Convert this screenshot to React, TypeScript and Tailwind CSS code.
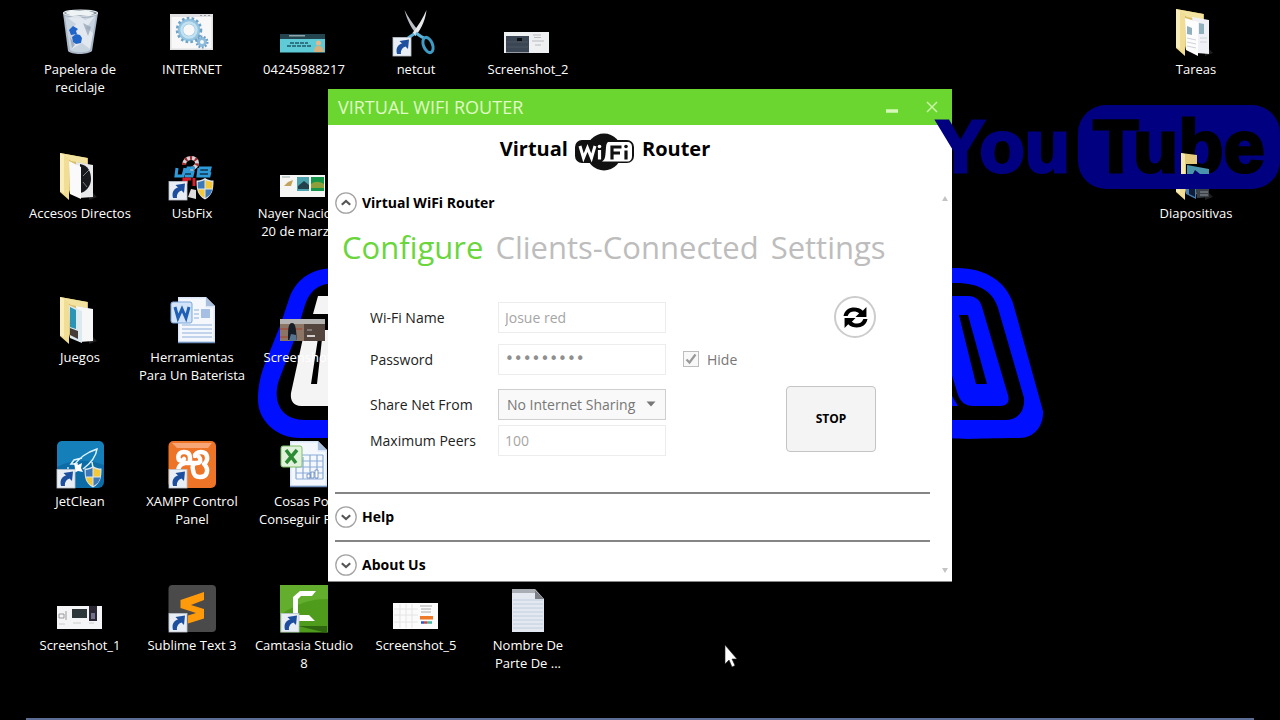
import React from 'react';

interface DesktopItem {
  label: string;
  icon: React.ReactNode;
}

/* ---------- shared icon pieces (48x48 grid) ---------- */

function Shortcut() {
  return (
    <g>
      <rect x="1" y="28.500" width="18" height="18.500" fill="#e9eef4" stroke="#b9c3cf" strokeWidth="0.8" />
      <path d="M5 45c-1.500-6 1-9.500 5-10.500l-2.500-2.500 9.500-1.500-1 9.500-2.500-2.500c-3 1-5 3.500-4.500 7.500z" fill="#1d4f9e" />
    </g>
  );
}

function Shield() {
  return (
    <g>
      <path d="M37 25c3 2 5.500 2.500 8.500 2.500 0 9-1 15-8.500 19-7.500-4-8.500-10-8.500-19 3 0 5.500-.500 8.500-2.500z" fill="#dfe6ee" />
      <path d="M36.500 27v8.500h-6.500c-.300-2-.300-4-.200-6.500 2.500-.200 4.700-.800 6.700-2zM37.500 36.500h6.700c-.700 3.700-2.700 6.500-6.700 8.500z" fill="#3d78b8" />
      <path d="M37.500 27v8.500h6.700c.300-2 .300-4 .200-6.500-2.500-.200-4.900-.800-6.900-2zM36.500 36.500h-6.400c.700 3.700 2.400 6.500 6.400 8.500z" fill="#f3c93a" />
    </g>
  );
}

function Svg({ children }: { children: React.ReactNode }) {
  return (
    <svg viewBox="0 0 48 48" className="h-12 w-12 overflow-visible" aria-hidden="true">
      {children}
    </svg>
  );
}

function RecycleBin() {
  return (
    <Svg>
      <path d="M7 4l5 38c3 4 20 4 24 0l6-38c-8-3-27-3-35 0z" fill="#a9b7c6" />
      <path d="M9 7l5 34c4 3 16 3 20 0l6-34c-8 3-24 3-31 0z" fill="#c8d3e0" />
      <path d="M12 9l8 6-7 8 8 5-5 12 10-6 8 6 3-16-7-5 9-12-10 4-7-5z" fill="#e9eef4" opacity="0.8" />
      <path d="M27 14l8 4-3 9zM14 28l5 8-3 3z" fill="#8595a9" opacity="0.6" />
      <ellipse cx="24.500" cy="4" rx="17" ry="3" fill="#6e7b88" stroke="#dfe6ea" strokeWidth="1.200" />
      <path d="M9 4l6-3 8 1 7-1 9 3-6 3-9-1-8 1z" fill="#eef3f6" />
      <path d="M13 21l4-4 5 3-2 2 1 3-6 1zM16 28l4-3 4 1 2 3-1 5-5 1-3-2z" fill="#2265c9" />
    </Svg>
  );
}

function Gears() {
  return (
    <Svg>
      <rect x="2" y="5" width="43" height="36" fill="#e0e0e3" />
      <rect x="3.500" y="8" width="40" height="31.500" fill="#f8f8f9" />
      <path d="M32 6.500h10" stroke="#9aa0a8" strokeDasharray="2 2" />
      <circle cx="21" cy="21" r="8.500" fill="none" stroke="#94c3e0" strokeWidth="5.500" />
      <circle cx="21" cy="21" r="12" fill="none" stroke="#6fa3c6" strokeWidth="2.500" strokeDasharray="2.600 2.300" />
      <circle cx="21" cy="21" r="7.500" fill="none" stroke="#c2e2f2" strokeWidth="2.500" />
      <circle cx="34" cy="33" r="3.500" fill="none" stroke="#8dbbdc" strokeWidth="3" />
      <circle cx="34" cy="33" r="5.500" fill="none" stroke="#6c9cc4" strokeWidth="2" strokeDasharray="1.800 1.600" />
    </Svg>
  );
}

function BannerThumb() {
  return (
    <Svg>
      <rect x="0" y="25" width="45" height="18.500" fill="#5ecbd6" />
      <rect x="0" y="25" width="45" height="5" fill="#24444f" />
      <rect x="9" y="26" width="16" height="1.500" fill="#8fa3aa" />
      <path d="M10 34h18M7 37h24" stroke="#1f5a6c" strokeWidth="1.300" strokeDasharray="4 1" />
      <circle cx="38.500" cy="34" r="2.500" fill="#e9b58a" />
      <path d="M34 43c0-5 2-6 4.500-6s5 1 5 6z" fill="#d8b080" />
    </Svg>
  );
}

function Scissors() {
  return (
    <Svg>
      <path d="M12.500 1c2 8 6 17 11 23l3-2C21 15 16 8 12.500 1z" fill="#b9bdc4" />
      <path d="M34.500 1c-1 9-4 17-11 26l-3-3C26 17 31 9 34.500 1z" fill="#e6e8ec" />
      <path d="M24 24c3 2 5 4 8 5" stroke="#5fb4d9" strokeWidth="3" />
      <ellipse cx="36" cy="36" rx="4.500" ry="8" transform="rotate(-22 36 36)" fill="none" stroke="#3e9bc4" strokeWidth="3" />
      <path d="M22 25l-6 4" stroke="#5fb4d9" strokeWidth="3" />
      <Shortcut />
    </Svg>
  );
}

function StoreThumb() {
  return (
    <Svg>
      <rect x="0" y="23" width="45" height="21" fill="#eef0f2" />
      <rect x="2" y="27" width="23" height="16.500" fill="#3a4653" />
      <path d="M3 33h21M3 38h21" stroke="#4c5763" />
      <rect x="13" y="29" width="5" height="3" fill="#0a0e13" />
      <path d="M29 26h8M30 28.500h7M28 32h12M31 36h6" stroke="#b8bbbf" />
    </Svg>
  );
}

function FolderBack() {
  return (
    <g>
      <path d="M33 36l8 8-8 3z" fill="#333" opacity="0.600" />
      <path d="M4 0l28 5v36H14z" fill="#d9bd67" />
      <path d="M4 0l27 5v6L15 8z" fill="#f3e3a0" />
    </g>
  );
}

function FolderFront() {
  return (
    <g>
      <path d="M4 0l9 5v42L4 39z" fill="#f1dd93" />
      <path d="M4 0l4 2v38l-4-2z" fill="#f9edba" />
    </g>
  );
}

function DiscFolder() {
  return (
    <Svg>
      <FolderBack />
      <path d="M20 9l17 3v32l-14 1z" fill="#e7e9eb" />
      <path d="M24 11c8 1 11 8 11 15s-5 13-11 14z" fill="#17191c" />
      <path d="M27 23l6-6M27 29l4 5" stroke="#77808a" />
      <path d="M13 8l12 6v32l-11-5z" fill="#fafafa" />
      <FolderFront />
    </Svg>
  );
}

function GamesFolder() {
  return (
    <Svg>
      <FolderBack />
      <path d="M20 9l17 3v32l-14 1z" fill="#f7f7f8" />
      <path d="M13 8l13 6v32l-12-5z" fill="#dce9ee" />
      <path d="M14 10l6 3v19l-6-2z" fill="#2c95b5" />
      <path d="M14 31l8 3v8l-8-4z" fill="#463d39" />
      <FolderFront />
    </Svg>
  );
}

function DocsFolder() {
  return (
    <Svg>
      <FolderBack />
      <path d="M20 8l17 3v34l-12-1z" fill="#f0f1f6" />
      <path d="M13 9l13 4v34l-12-6z" fill="#fdfdfe" />
      <path d="M15 17l5 2v7l-5-1zM27 14l5 1v10h-5z" fill="#8fb0bc" />
      <path d="M15 29l9 2M15 33l9 2M15 37l9 2M28 29h7M28 33h7" stroke="#d0d2dc" />
      <FolderFront />
    </Svg>
  );
}

function SlidesFolder() {
  return (
    <Svg>
      <FolderBack />
      <path d="M20 15l17 2v27l-12 1z" fill="#3a4146" />
      <path d="M20 15l17 2v6H20z" fill="#4f9aa6" />
      <path d="M13 13l11 3v30l-10-5z" fill="#4a7eb3" />
      <path d="M17 34l6 2v8l-6-3z" fill="#101c35" />
      <path d="M28 39h8M28 42h8" stroke="#8d9398" />
      <FolderFront />
    </Svg>
  );
}

function UsbFix() {
  return (
    <Svg>
      <path d="M16 12c0-9 13-9 13-2 0 5-6 4-6 9" fill="none" stroke="#d9d2d4" strokeWidth="4" />
      <path d="M16 12c0-9 13-9 13-2 0 5-6 4-6 9" fill="none" stroke="#a02b30" strokeWidth="4" strokeDasharray="2 3" />
      <path d="M9 15l-1 8h7l2-8M27 15h-7l-1 4h6l-1 4h-7M31 15h11l-1 4h-10M31 15l-1 8h11l1-4" fill="none" stroke="#2e9bd8" strokeWidth="3" />
      <path d="M15 26h8M14 29h6M26 25v8M16 25v9" stroke="#d4202a" strokeWidth="3" />
      <path d="M20 44l3-8 5 1v9z" fill="#ddd" />
      <Shortcut />
      <Shield />
    </Svg>
  );
}

function PhotosThumb() {
  return (
    <Svg>
      <rect x="0" y="22" width="45" height="22" fill="#f5f5f4" />
      <path d="M2 24h8" stroke="#9aa" />
      <path d="M4 33l4-4 5-2-2 6z" fill="#c3a35c" />
      <rect x="17" y="24" width="12" height="14" fill="#4da4ae" />
      <path d="M18 33l6-5 5 4v4H18z" fill="#23414a" />
      <rect x="31" y="24" width="13" height="14" fill="#16964a" />
      <path d="M31 31c4-3 8-3 13 0v4H31z" fill="#8d9f3b" />
    </Svg>
  );
}

function PageShape() {
  return (
    <g>
      <path d="M10 0h28l9 9v37H10z" fill="#dbe7f7" />
      <path d="M11.500 1.500h26v9h8v34h-34z" fill="#f4f8fd" />
      <path d="M38 0l9 9h-9z" fill="#a9bfdc" />
      <path d="M10 45.500h37" stroke="#6f8fbd" strokeWidth="1.500" />
    </g>
  );
}

function WordDoc() {
  return (
    <Svg>
      <PageShape />
      <path d="M26 13h5M26 17h5M26 21h5M14 28h30M14 32h30M14 36h30M14 40h30" stroke="#8eb0da" strokeWidth="1.200" />
      <rect x="33" y="12" width="9" height="9" fill="#a5c0e4" />
      <rect x="3" y="5" width="21" height="21" rx="2" fill="#d3e4f8" stroke="#7aa7dc" />
      <path d="M7 10l3 11 4-9 4 9 3-11" fill="none" stroke="#1f5fb5" strokeWidth="3" />
    </Svg>
  );
}

function ExcelDoc() {
  return (
    <Svg>
      <PageShape />
      <path d="M16 38V20M23 38V16M30 38V14M37 38V14M43 38V14M22 14h21M16 20h27M16 26h27M16 32h27M16 38h27" stroke="#89abd6" strokeWidth="1.200" />
      <path d="M27 37v-4h3v4zM31 37v-6h3v6zM35 37v-8h3v8z" fill="#fff" stroke="#5d84bd" strokeWidth="0.800" />
      <rect x="1" y="5" width="21" height="21" rx="2" fill="#e1f2dc" stroke="#7cbf6b" />
      <path d="M6 9l10 13M17 9L6 22" stroke="#2b8a34" strokeWidth="3.500" />
    </Svg>
  );
}

function PersonThumb() {
  return (
    <Svg>
      <rect x="0" y="22" width="45" height="22" fill="#54463f" />
      <rect x="0" y="22" width="24" height="22" fill="#8d7566" />
      <path d="M0 22h45v5H0z" fill="#b5b4b2" />
      <path d="M0 32h22M0 40h10" stroke="#a8442c" strokeWidth="1.200" />
      <path d="M8 43c0-10 0-17 4-17s4 7 5 17z" fill="#171d27" />
      <path d="M9 44l2-7 5 1 1 6z" fill="#56748f" />
      <path d="M27 39h8" stroke="#fff" strokeWidth="1.500" />
      <path d="M27 33h5" stroke="#aaa" />
    </Svg>
  );
}

function JetClean() {
  return (
    <Svg>
      <rect x="1" y="0" width="47" height="47" rx="6" fill="#0d6ca6" />
      <path d="M1 26c14-8 32-8 47-2V6c0-4-2-6-6-6H7C3 0 1 2 1 6z" fill="#157fb9" />
      <path d="M19 23c5-6 10-11 22-15-1 8-6 14-14 20M26 17l-8 2-3 4h7M36 21l1 6-5 5" fill="none" stroke="#dff2fb" strokeWidth="1.500" />
      <path d="M18 22l4 2 4-2-1 5 2 4-5-1-4 2 1-5z" fill="#fff" />
      <circle cx="12" cy="27" r="1" fill="#cfe9f5" />
      <Shortcut />
      <Shield />
    </Svg>
  );
}

function Xampp() {
  return (
    <Svg>
      <rect x="0.500" y="0" width="47.500" height="47" rx="5" fill="#ee7427" />
      <path d="M4 2h40l-4 5H9z" fill="#f7a678" />
      <path
        d="M11 19c-2-5 1-8 5-8 5 0 6 3 6 6v5h7c4 0 4-4 2-6M11 19c2 1 3 1 5-1M11 34c-2-6 0-11 6-12h5M29 22c-4 0-5 3-4 7 1 6 3 7 7 7 8 0 9-8 4-13 5-4 4-12-3-12-4 0-6 2-6 4"
        fill="none"
        stroke="#fff"
        strokeWidth="4.500"
        strokeLinejoin="round"
        strokeLinecap="round"
      />
      <Shortcut />
    </Svg>
  );
}

function SublimeText() {
  return (
    <Svg>
      <rect x="0.500" y="0" width="47.500" height="47" rx="4" fill="#4a4a4a" />
      <path d="M36 7v8l-13 5 13 4v9.500l-16 5v-8l8-2.500-15.500-5v-8z" fill="#ff9a0a" />
      <Shortcut />
    </Svg>
  );
}

function Camtasia() {
  return (
    <Svg>
      <rect x="0" y="0" width="48" height="47.500" fill="#4f9c1d" />
      <path d="M0 0h48v14c-18 0-30 4-48 16z" fill="#63ae2c" />
      <path d="M18 41h29v7z" fill="#2e6710" />
      <path d="M36 6H20l-7 6v24h22l-6-6H18V14l3-3h11z" fill="#fff" />
      <Shortcut />
    </Svg>
  );
}

function PhonesThumb() {
  return (
    <Svg>
      <rect x="1" y="21" width="45" height="23" fill="#f5f5f7" />
      <path d="M3 29h5v4H3zM10 26v9" stroke="#999" fill="none" />
      <rect x="16" y="24" width="15" height="9" fill="#2d373b" />
      <rect x="33" y="21" width="8" height="15" fill="#2c2735" />
      <rect x="35" y="28" width="4" height="6" fill="#73708d" />
      <path d="M3 39h6M17 38h8M33 38h5" stroke="#ccc" />
    </Svg>
  );
}

function OrdersThumb() {
  return (
    <Svg>
      <rect x="1" y="18" width="45" height="26" fill="#fbfbfb" />
      <path d="M2 24h24M2 30h24M2 37h24M8 19v24M14 19v24M20 19v24" stroke="#e4e4e4" />
      <path d="M28 21h12M29 24h10M29 27h10" stroke="#aaa" />
      <rect x="28" y="31" width="13" height="3.500" fill="#ee7a27" />
      <path d="M29 37.500h3" stroke="#2b59c3" strokeWidth="2.500" />
      <path d="M32 37.500h3" stroke="#d9403b" strokeWidth="2.500" />
      <path d="M35 37.500h5" stroke="#44b4a0" strokeWidth="2.500" />
    </Svg>
  );
}

function TextFile() {
  return (
    <Svg>
      <path d="M8 4h23l9 10v33H8z" fill="#e4e9f1" />
      <path d="M8 4h23v4H8z" fill="#a9adb4" />
      <path d="M31 5v9h9z" fill="#7b8087" />
      <path d="M9 15h30M9 19h30M9 23h30M9 27h30M9 31h30M9 35h30M9 39h30M9 43h30" stroke="#b9cbdc" strokeWidth="0.900" />
    </Svg>
  );
}

const rows: DesktopItem[][] = [
  [
    { label: 'Papelera de\nreciclaje', icon: <RecycleBin /> },
    { label: 'INTERNET', icon: <Gears /> },
    { label: '04245988217', icon: <BannerThumb /> },
    { label: 'netcut', icon: <Scissors /> },
    { label: 'Screenshot_2', icon: <StoreThumb /> },
  ],
  [
    { label: 'Accesos Directos', icon: <DiscFolder /> },
    { label: 'UsbFix', icon: <UsbFix /> },
    { label: 'Nayer Nacional\n20 de marzo...', icon: <PhotosThumb /> },
  ],
  [
    { label: 'Juegos', icon: <GamesFolder /> },
    { label: 'Herramientas\nPara Un Baterista', icon: <WordDoc /> },
    { label: 'Screenshot_3', icon: <PersonThumb /> },
  ],
  [
    { label: 'JetClean', icon: <JetClean /> },
    { label: 'XAMPP Control\nPanel', icon: <Xampp /> },
    { label: 'Cosas Por\nConseguir Pa...', icon: <ExcelDoc /> },
  ],
  [
    { label: 'Screenshot_1', icon: <PhonesThumb /> },
    { label: 'Sublime Text 3', icon: <SublimeText /> },
    { label: 'Camtasia Studio\n8', icon: <Camtasia /> },
    { label: 'Screenshot_5', icon: <OrdersThumb /> },
    { label: 'Nombre De\nParte De ...', icon: <TextFile /> },
  ],
];

const rightItems: DesktopItem[] = [
  { label: 'Tareas', icon: <DocsFolder /> },
  { label: 'Diapositivas', icon: <SlidesFolder /> },
];

function DesktopIcon({ label, icon }: DesktopItem) {
  return (
    <div className="flex h-36 w-28 flex-col items-center gap-[3px]">
      {icon}
      <span className="whitespace-pre text-center text-[13px] leading-[18px] text-white">{label}</span>
    </div>
  );
}

function Wallpaper() {
  return (
    <svg viewBox="255 262 792 180" className="absolute left-[255px] top-[262px] h-[180px] w-[792px]" aria-hidden="true">
      <path d="M340 268c-26-1-42 9-50 28l-10 30-16 40c-5 14-6 24-6 34 0 20 18 38 42 38h650c20 2 30 0 70 0 14 0 24-12 23-27l-30-108c-7-21-27-35-56-35z" fill="#0010ff" />
      <path d="M340 283c-22-1-30 8-35 22l-10 33-16 42c-7 22 2 40 26 40h700c13 0 20-9 19-22l-26-90c-5-16-18-25-42-25z" fill="#000" />
      <path d="M318 296h40v18h-45zM303 338l-12 55c-1 8 3 13 10 13h50V330h-28l-6 54h-6l7-46z" fill="#f4f4f4" />
      <path d="M930 296h38c8 0 12 4 14 11l26 88c2 7-1 11-8 11h-27c-8 0-12-4-15-11l-20-65z" fill="#0010ff" />
      <path d="M959 315h9l19 69h-11z" fill="#000" />
      <path d="M945 384l13 22h-13z" fill="#0010ff" />
    </svg>
  );
}

function YouTubeLogo() {
  return (
    <div className="absolute right-0 top-[105px] flex items-center font-['Liberation_Sans'] text-[74px] font-bold leading-[84px]">
      <span className="pr-2 text-[#000080] [-webkit-text-stroke:3px_#000080]">You</span>
      <span className="relative w-[202px] rounded-[28px] bg-[#000080] text-center text-black [-webkit-text-stroke:3px_#000]">
        Tube
        {/* folder seen through the letter b */}
        <svg viewBox="0 0 30 22" className="absolute left-[102px] top-12 h-[22px] w-[30px]" aria-hidden="true">
          <path d="M1 0l16 2v9H6v10H1z" fill="#e3ca7c" />
          <path d="M1 0l4 1v20H1z" fill="#f6e7ab" />
          <path d="M7 12l22 4v5H20l-5-4-2 4H7z" fill="#4a93ad" />
        </svg>
      </span>
    </div>
  );
}

function WifiLogo() {
  return (
    <svg viewBox="0 0 62 38" className="mt-1 h-[38px] w-[62px]" role="img" aria-label="Wi-Fi">
      <ellipse cx="30" cy="19" rx="18" ry="18.500" fill="#111" />
      <rect x="1" y="7" width="59" height="23" rx="7" fill="#111" />
      <path d="M34 9h19c3.500 0 5 2 5 5v9c0 3.500-1.500 5.500-5 5.500H28c3-2 3-4 3.500-8l.500-6c.300-3 .500-4 2-5.500z" fill="#fff" />
      <path d="M6 13l3.500 12 4-10 4 10 3.500-12" fill="none" stroke="#fff" strokeWidth="3" />
      <path d="M25.500 17v9.500" stroke="#fff" strokeWidth="3.200" />
      <circle cx="25.500" cy="13.500" r="1.800" fill="#fff" />
      <path d="M38 26.500V14h9.500M38 20h8" fill="none" stroke="#111" strokeWidth="3.200" />
      <path d="M52 17.500v9" stroke="#111" strokeWidth="3.200" />
      <circle cx="52" cy="13.500" r="1.800" fill="#111" />
    </svg>
  );
}

function SectionHeader({ title, open = false }: { title: string; open?: boolean }) {
  return (
    <button type="button" aria-expanded={open} className="flex h-[22px] items-center gap-[5px] text-[14px] font-bold leading-[22px] text-black">
      <svg viewBox="0 0 22 22" className="h-[22px] w-[22px]" aria-hidden="true">
        <circle cx="11" cy="11" r="10.200" fill="#fff" stroke="#a3a3a3" strokeWidth="1.300" />
        <path d={open ? 'M6.800 12.800L11 9l4.200 3.800' : 'M6.800 9.200L11 13l4.200-3.800'} fill="none" stroke="#555" strokeWidth="2.200" />
      </svg>
      {title}
    </button>
  );
}

const fieldClass = 'block h-[31px] w-full border border-[#ececec] bg-white px-[6px] leading-5 outline-none';

function ConfigureForm() {
  return (
    <form className="flex justify-between pl-[35px] pr-[54px]">
      <div className="grid grid-cols-[128px_168px_auto] items-center text-[14px] text-[#222]">
        <label htmlFor="wifi">Wi-Fi Name</label>
        <div className="flex h-[42px] items-center">
          <input id="wifi" readOnly value="Josue red" className={`${fieldClass} text-[14px] text-[#a5a5a5]`} />
        </div>
        <span />

        <label htmlFor="pass">Password</label>
        <div className="flex h-[42px] items-center">
          <input id="pass" type="password" readOnly value="josue1234" className={`${fieldClass} font-['DejaVu_Sans'] text-[15px] text-[#8f8f8f]`} />
        </div>
        <label className="flex items-center gap-2 pl-[17px] text-[#777]">
          <span className="relative h-4 w-4">
            <input type="checkbox" defaultChecked className="block h-4 w-4 appearance-none border border-[#bdbdbd] bg-[#f8f8f8]" />
            <svg viewBox="0 0 16 16" className="pointer-events-none absolute inset-0" aria-hidden="true">
              <path d="M3.500 8.500l3 3 6-8" fill="none" stroke="#999" strokeWidth="2.200" />
            </svg>
          </span>
          Hide
        </label>

        <label htmlFor="share">Share Net From</label>
        <div className="relative flex h-12 items-center">
          <select id="share" className="h-[31px] w-full appearance-none border border-[#cfcfcf] bg-[#f9f9f9] px-2 text-[14px] text-[#777]">
            <option>No Internet Sharing</option>
          </select>
          <svg viewBox="0 0 10 6" className="pointer-events-none absolute right-[10px] h-[6px] w-[10px]" aria-hidden="true">
            <path d="M0.500 0.500h9L5 5.500z" fill="#777" />
          </svg>
        </div>
        <span />

        <label htmlFor="peers">Maximum Peers</label>
        <div className="flex h-6 items-center">
          <input id="peers" readOnly value="100" className={`${fieldClass} text-[14px] text-[#a5a5a5]`} />
        </div>
        <span />
      </div>

      <div className="flex flex-col items-end justify-between">
        <button type="button" aria-label="Refresh" className="flex h-[42px] w-[42px] items-center justify-center rounded-full border-2 border-[#cccccc] bg-white">
          <svg viewBox="0 0 24 22" className="h-[23px] w-[25px]" aria-hidden="true">
            <path d="M0.500 9.500C2 0 14-.500 19 4.500L22.500 1v9.500H12l3.500-3.500C12 4 6 4.500 4.500 9.500z" fill="#000" />
            <path d="M23.500 12.500C22 22 10 22.500 5 17.500L1.500 21v-9.500H12l-3.500 3.500c3.500 3 9.500 2.500 11-2.500z" fill="#000" />
          </svg>
        </button>
        <button type="button" className="h-[66px] w-[90px] rounded-[4px] border border-[#c4c4c4] bg-[#f4f4f4] text-[12px] font-bold text-black">
          STOP
        </button>
      </div>
    </form>
  );
}

function RouterWindow() {
  return (
    <main className="absolute left-[328px] top-[89px] w-[624px] border-b border-[#888] bg-white">
      <header className="flex h-9 items-center justify-between bg-[#6ad62f] pl-[10px] pr-[14px] text-[#e0fbc8]">
        <h1 className="text-[18px]">VIRTUAL WIFI ROUTER</h1>
        <div className="flex items-center gap-7">
          <button type="button" aria-label="Minimize">
            <svg viewBox="0 0 12 12" className="h-3 w-3"><path d="M0 10h12" stroke="#d5f8b8" strokeWidth="3.500" /></svg>
          </button>
          <button type="button" aria-label="Close">
            <svg viewBox="0 0 12 12" className="h-3 w-3"><path d="M1 1l10 10M11 1L1 11" stroke="#c9f5a6" strokeWidth="1.500" /></svg>
          </button>
        </div>
      </header>

      <div className="flex h-[67px] justify-center gap-[6px] pr-[70px] pt-1">
        <span className="text-[20px] font-bold leading-10">Virtual</span>
        <WifiLogo />
        <span className="text-[20px] font-bold leading-10">Router</span>
      </div>

      <div className="relative pl-[7px] pr-[22px]">
        <SectionHeader title="Virtual WiFi Router" open />
        <nav className="flex gap-3 pl-[7px] pt-2 text-[31px] leading-[50px] text-[#bdbdbd]">
          <a href="#configure" className="text-[#6ad63c]">Configure</a>
          <a href="#clients">Clients-Connected</a>
          <a href="#settings">Settings</a>
        </nav>
        <div className="pb-10 pt-6">
          <ConfigureForm />
        </div>
        <div className="border-t-2 border-[#858585] py-3">
          <SectionHeader title="Help" />
        </div>
        <div className="border-t-2 border-[#858585] pb-[5px] pt-3">
          <SectionHeader title="About Us" />
        </div>
        <svg viewBox="0 0 6 5" className="absolute right-1 top-1 h-[5px] w-[6px]" aria-hidden="true"><path d="M0 5h6L3 0z" fill="#c4c4c4" /></svg>
        <svg viewBox="0 0 6 5" className="absolute bottom-2 right-1 h-[5px] w-[6px]" aria-hidden="true"><path d="M0 0h6L3 5z" fill="#c4c4c4" /></svg>
      </div>
    </main>
  );
}

export default function App() {
  return (
    <div className="relative h-screen min-h-[720px] overflow-hidden bg-black font-['Open_Sans','Noto_Sans',sans-serif]">
      <Wallpaper />

      <div className="relative flex justify-between pl-6 pr-7 pt-[9px]">
        <div>
          {rows.map((row, i) => (
            <div key={i} className="flex">
              {row.map((item) => (
                <DesktopIcon key={item.label} {...item} />
              ))}
            </div>
          ))}
        </div>
        <div>
          {rightItems.map((item) => (
            <DesktopIcon key={item.label} {...item} />
          ))}
        </div>
      </div>

      <RouterWindow />
      <YouTubeLogo />

      {/* top edge of the auto-hidden taskbar */}
      <div className="absolute inset-x-[26px] bottom-0 h-[2px] bg-[#5b6d95]" />

      <svg viewBox="0 0 14 24" className="absolute left-[724px] top-[644px] h-6 w-[14px]" aria-hidden="true">
        <path d="M1 1v19l4-4 3 7 3-1.500-3-6.500h5z" fill="#fff" stroke="#222" strokeWidth="0.600" />
      </svg>
    </div>
  );
}
